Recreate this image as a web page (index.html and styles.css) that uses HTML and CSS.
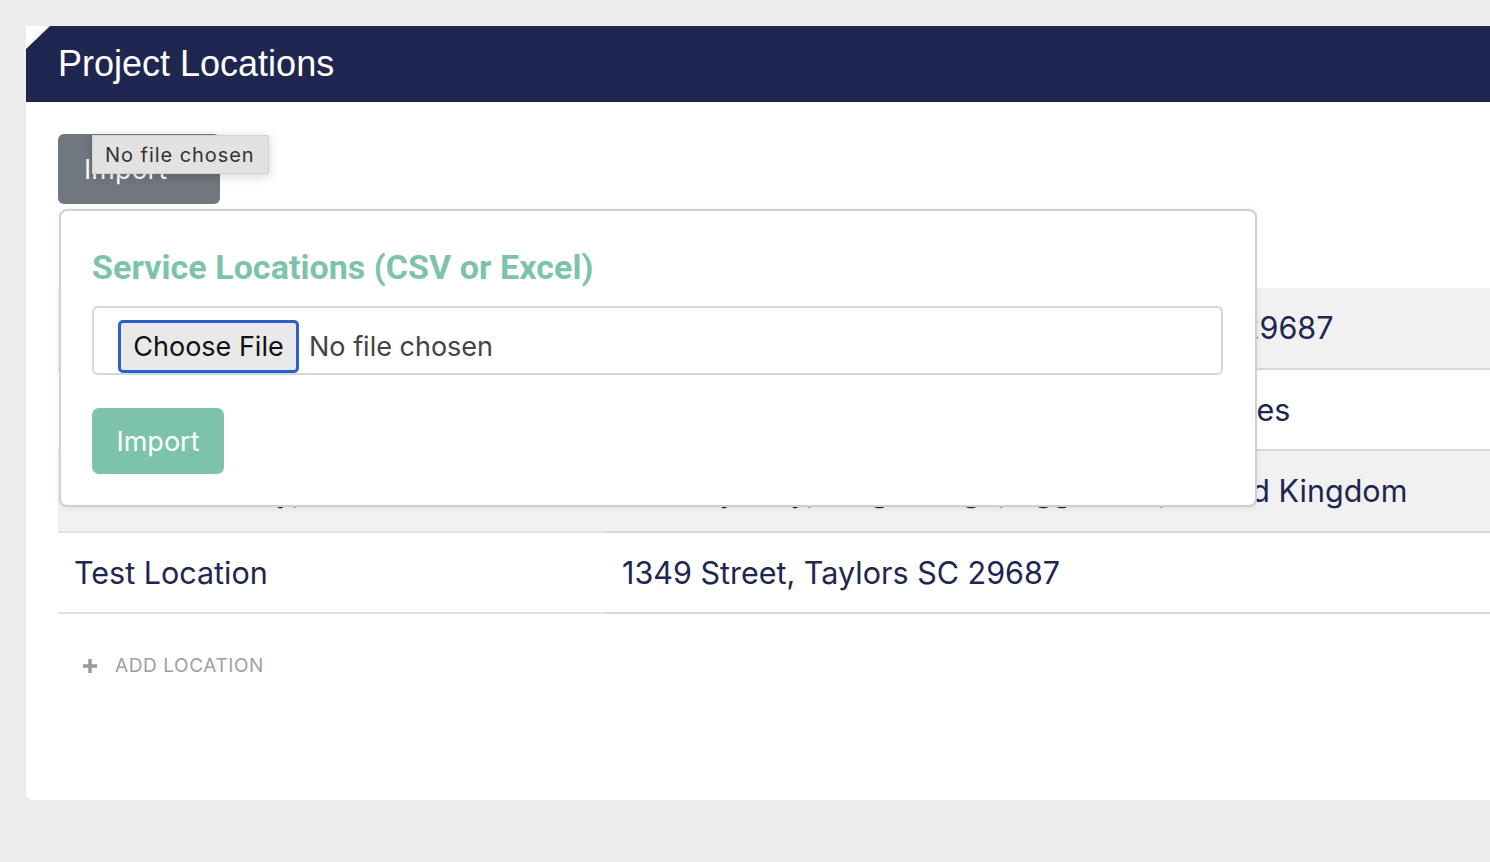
FILE: index.html
```html
<!DOCTYPE html>
<html>
<head>
<meta charset="utf-8">
<title>Project Locations</title>
<link rel="stylesheet" href="styles.css">
</head>
<body>
<div class="card">
  <div class="card-header">
    <h1 class="card-title">Project Locations</h1>
  </div>
  <div class="card-body">
    <div class="import-wrap">
      <button class="btn btn-gray">Import</button>
      <div class="tooltip">No file chosen</div>
      <div class="popup">
        <h2 class="popup-title">Service Locations (CSV or Excel)</h2>
        <div class="file-input">
          <span class="file-btn">Choose File</span>
          <span class="file-name">No file chosen</span>
        </div>
        <button class="btn btn-green">Import</button>
      </div>
    </div>
    <table class="loc-table">
      <thead>
        <tr><th class="col-name">Name</th><th>Address</th></tr>
      </thead>
      <tbody>
        <tr class="row-alt"><td class="col-name">Headquarters Office</td><td>2200 N. Main Street, Suite 100, Taylors SC 29687</td></tr>
        <tr><td class="col-name">Seattle Branch</td><td>1500 Pine Avenue E, Seattle WA, United States</td></tr>
        <tr class="row-alt"><td class="col-name">London Facility, UK</td><td>12 Quay Way, Kingsbridge, Eggleston, United Kingdom</td></tr>
        <tr><td class="col-name">Test Location</td><td>1349 Street, Taylors SC 29687</td></tr>
      </tbody>
    </table>
    <div class="add-location">
      <svg class="plus" width="16" height="16" viewBox="0 0 16 16"><path d="M6.3 1h3.4v5.3H15v3.4H9.7V15H6.3V9.7H1V6.3h5.3z" fill="#999"/></svg>
      <span>ADD LOCATION</span>
    </div>
  </div>
</div>
</body>
</html>
```

FILE: styles.css
```css
html, body {
  margin: 0;
  padding: 0;
}
body {
  background: #ededed;
  overflow: hidden;
  width: 1490px;
  height: 862px;
  font-family: Inter, "Noto Sans", sans-serif;
}
.card {
  margin: 26px 0 0 26px;
  width: 1500px;
  height: 774px;
  background: #fff;
  border-radius: 0 0 0 7px;
  overflow: hidden;
}
.card-header {
  height: 76px;
  background: #1f2650;
  clip-path: polygon(24px 0, 100% 0, 100% 100%, 0 100%, 0 23px);
  display: flex;
  align-items: center;
  padding-left: 33px;
}
.card-title {
  margin: 0 0 0 -1px;
  font-family: "Liberation Sans", Arial, sans-serif;
  font-weight: 400;
  font-size: 36px;
  color: #fff;
  line-height: 1;
}
.card-body {
  padding: 32px 0 0 32px;
}
.import-wrap {
  position: relative;
  height: 70px;
}
.btn {
  border: none;
  font-family: Inter, "Noto Sans", sans-serif;
  font-size: 27px;
  color: #fff;
  cursor: pointer;
}
.btn-gray {
  width: 162px;
  height: 70px;
  background: #71777e;
  border-radius: 6px;
  padding: 0 0 0 26px;
  text-align: left;
}
.tooltip {
  position: absolute;
  left: 34px;
  top: 1px;
  width: 177px;
  height: 39px;
  box-sizing: border-box;
  background: #e2e2e2;
  border: 1px solid #d2d2d2;
  box-shadow: 0 2px 10px rgba(0,0,0,0.18);
  font-size: 20px;
  color: #333;
  display: flex;
  align-items: center;
  padding-left: 12px;
  letter-spacing: 0.95px;
  z-index: 3;
}
.popup {
  position: absolute;
  left: 1px;
  top: 75px;
  width: 1198px;
  height: 298px;
  box-sizing: border-box;
  background: #fff;
  border: 2px solid #d0d0d0;
  border-radius: 8px;
  box-shadow: 0 1px 6px rgba(0,0,0,0.08);
  padding: 37px 32px 0 31px;
  z-index: 2;
}
.popup-title {
  margin: 0;
  font-family: Roboto, "Noto Sans", sans-serif;
  font-weight: 700;
  font-size: 34px;
  line-height: 38px;
  color: #7dc3ac;
  letter-spacing: 0.05px;
}
.file-input {
  margin-top: 20px;
  height: 69px;
  box-sizing: border-box;
  border: 2px solid #d3d6da;
  border-radius: 6px;
  display: flex;
  align-items: flex-end;
  padding-left: 24px;
}
.file-btn {
  height: 53px;
  box-sizing: border-box;
  width: 181px;
  background: #e9e9e9;
  border: 3px solid #2c5fcc;
  border-radius: 5px;
  color: #111;
  font-size: 27px;
  display: flex;
  align-items: center;
  justify-content: center;
}
.file-name {
  font-size: 27px;
  color: #444;
  height: 53px;
  display: flex;
  align-items: center;
  margin-left: 10px;
}
.btn-green {
  margin-top: 33px;
  width: 132px;
  height: 66px;
  background: #7dc3ac;
  border-radius: 7px;
  padding: 0;
}
.loc-table {
  width: 1460px;
  border-collapse: collapse;
  margin-top: 0;
  font-size: 30.5px;
  color: #1f2650;
}
.loc-table th {
  height: 84px;
  text-align: left;
  padding: 0 16px;
  font-size: 22px;
  color: #1f2650;
  font-weight: 600;
}
.loc-table td {
  height: 79.5px;
  padding: 0 16px;
  border-bottom: 2px solid #d9d9d9;
  white-space: nowrap;
}
.loc-table .col-name {
  width: 516px;
  padding-left: 16px;
}
.loc-table td.col-name {
  border-bottom-color: #dfe3e8;
}
.row-alt td {
  background: #f1f1f1;
}
.add-location {
  display: flex;
  align-items: center;
  margin-top: 40px;
  padding-left: 24px;
  color: #a0a0a0;
  font-size: 19px;
  letter-spacing: 0.6px;
}
.plus {
  margin-right: 17px;
}
```
